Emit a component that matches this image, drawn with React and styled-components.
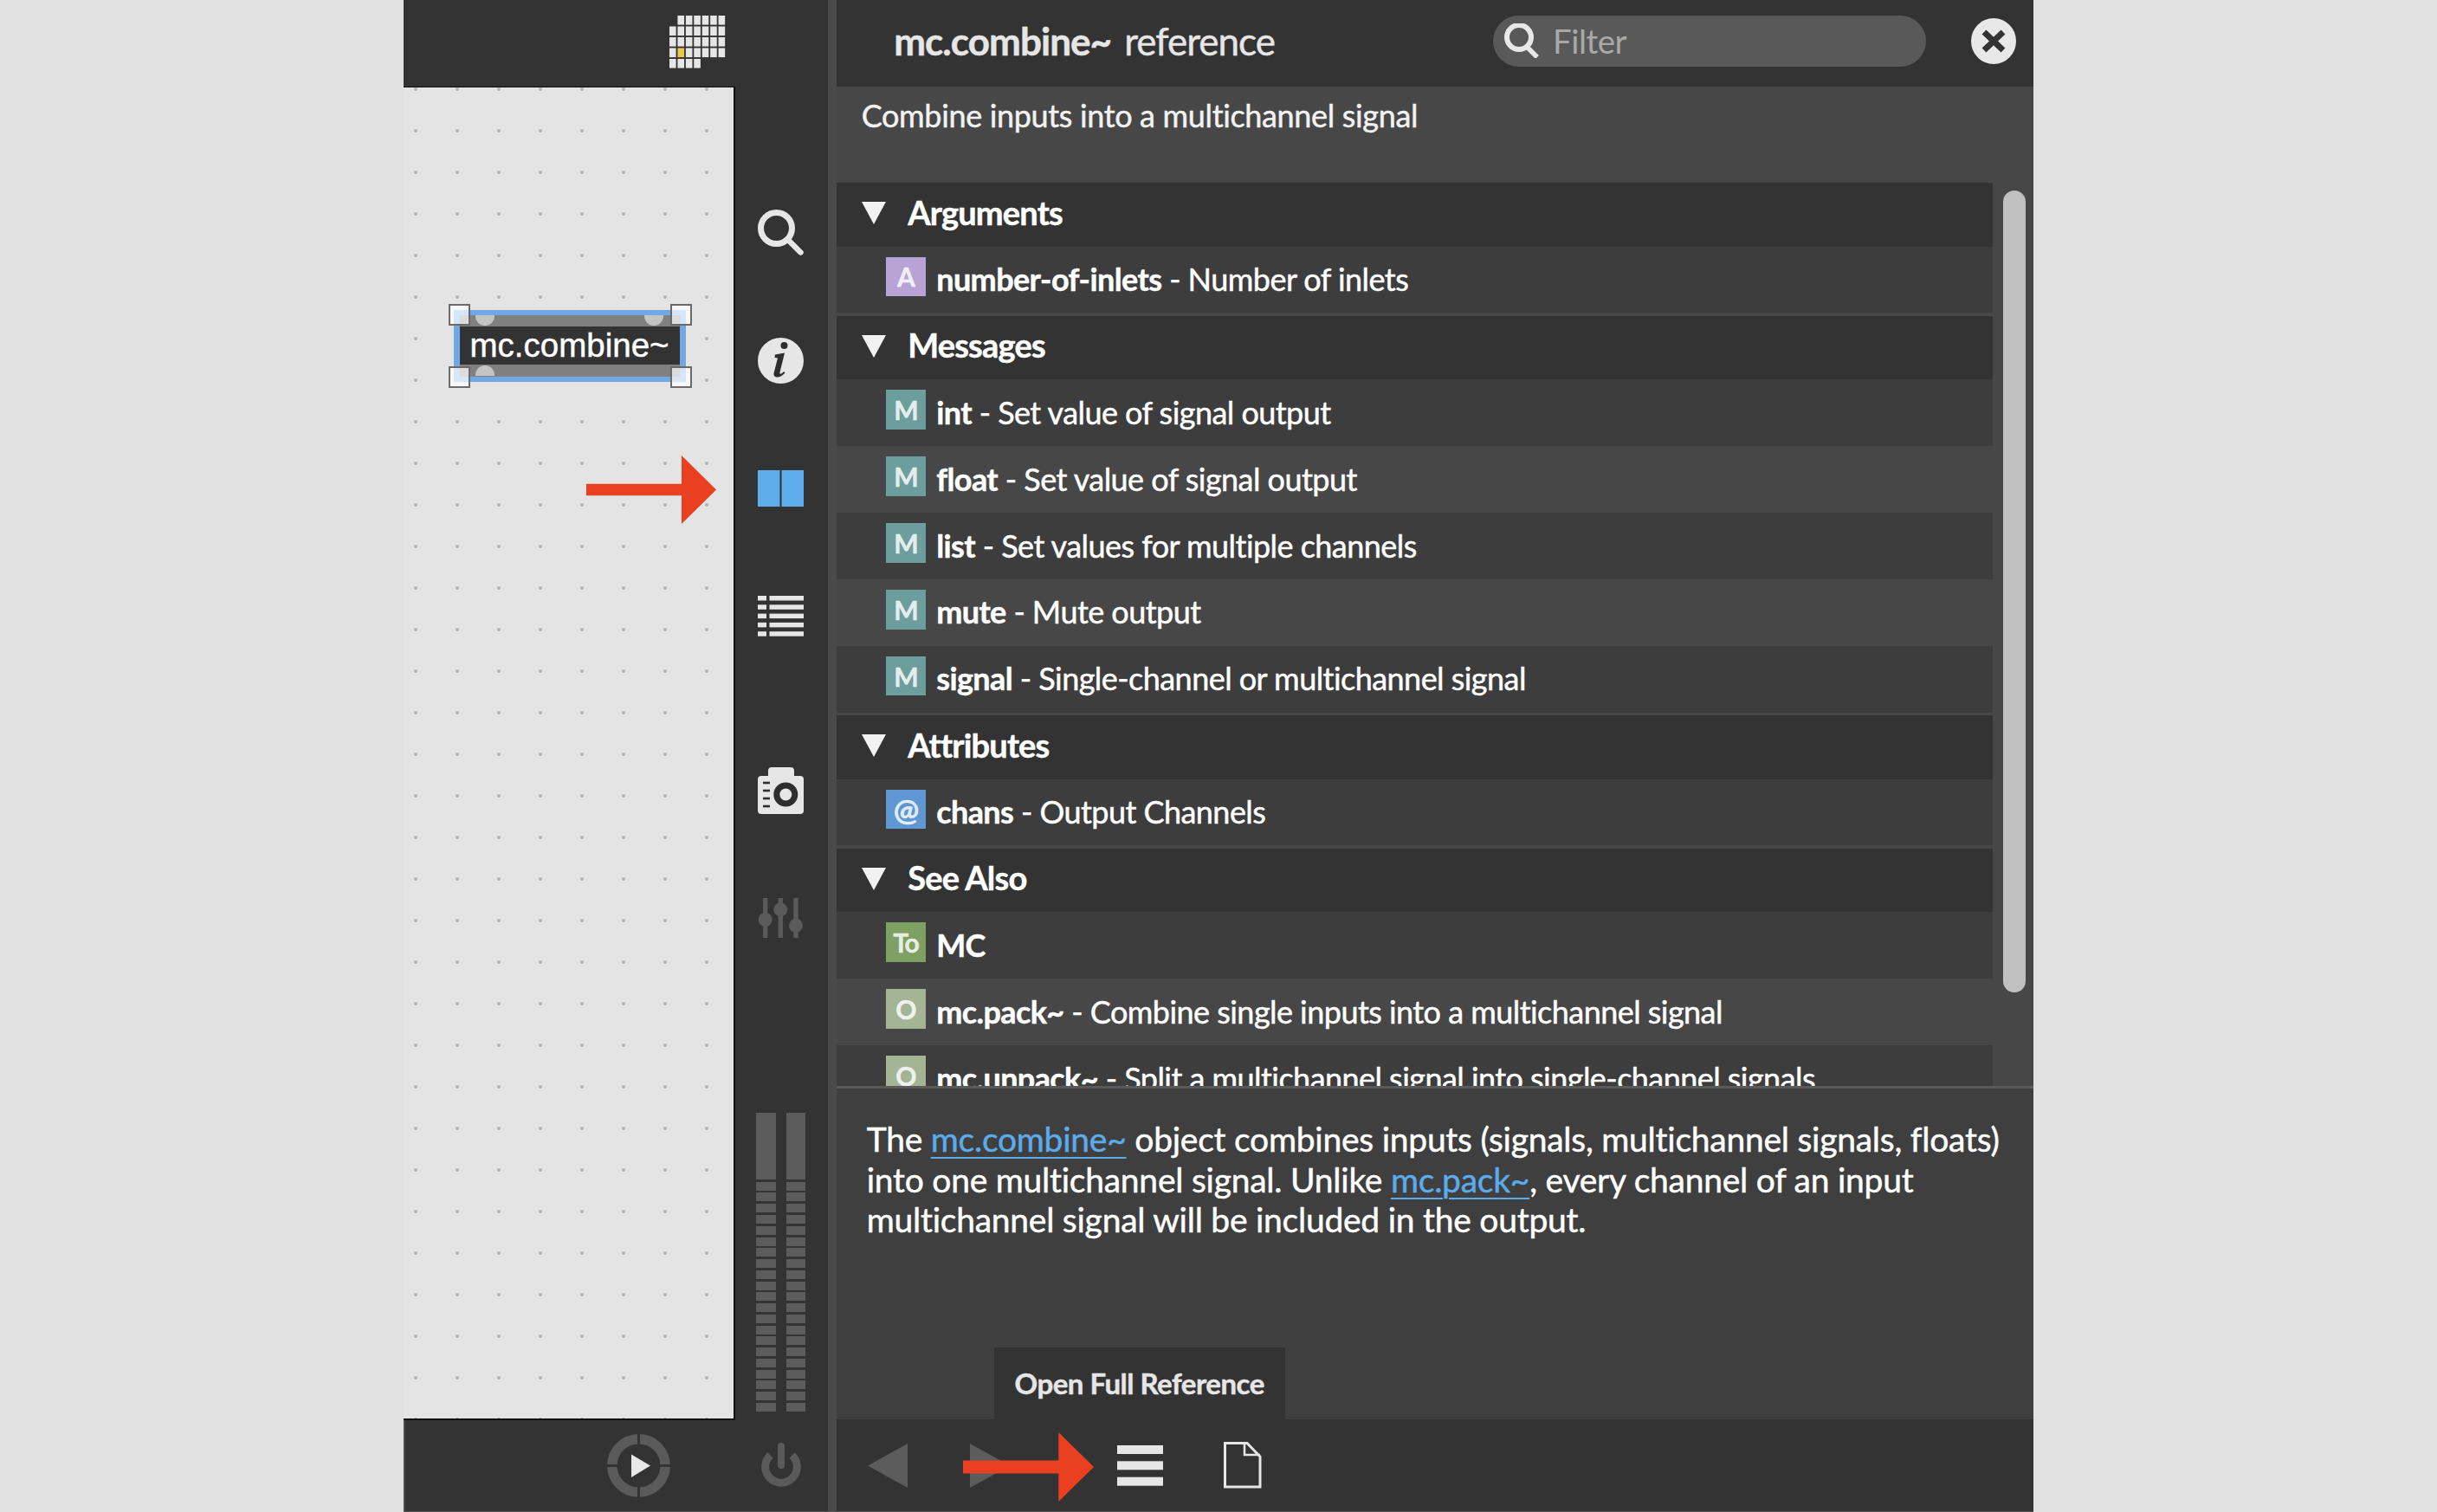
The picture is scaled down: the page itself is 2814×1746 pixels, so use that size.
import React from "react";
import styled, { createGlobalStyle } from "styled-components";

const Global = createGlobalStyle`
  html, body { margin: 0; padding: 0; background: #e1e1e1; }
  body { font-family: Lato, "Noto Sans", sans-serif; overflow: hidden; }
  * { box-sizing: border-box; }
`;

const Win = styled.div`
  width: 1882px; height: 1746px; margin: 0 auto;
  display: grid; grid-template-columns: 490px 9.7px 1fr;
  background: #333; overflow: hidden; border-bottom: 1px solid #555;
  -webkit-text-stroke: .45px currentColor;
`;

/* ---------- left patcher pane ---------- */
const Patcher = styled.section`
  display: grid; grid-template-columns: 383px 107px; grid-template-rows: 100px 1fr 105.5px;
  background: #333; min-height: 0;
`;
const PatcherTop = styled.header`
  grid-column: 1 / 3; display: flex; justify-content: flex-end; align-items: flex-start;
  padding: 17.5px 117.5px 0 0;
`;
const Canvas = styled.main`
  position: relative; background-color: #e4e4e4;
  background-image: radial-gradient(circle, #b4b4b4 1.6px, transparent 2.4px);
  background-size: 48px 48px; background-position: -10px -22px;
  border-top: 1px solid #111; border-right: 2px solid #111; border-bottom: 2px solid #111;
`;
const ObjectBox = styled.div`
  position: absolute; left: 58px; top: 257px; width: 268px; height: 83px;
  border: 6.5px solid #71a7e2; border-width: 6.5px 7px; background: #808080;
  display: flex; flex-direction: column;
`;
const PortBand = styled.div`
  height: 13px; display: flex; justify-content: space-between; padding: 0 19px 0 18px;
  align-items: ${p => (p.$bottom ? "flex-end" : "flex-start")};
`;
const Port = styled.span`
  width: 22px; height: 12px; background: #c4c4c4;
  border-radius: ${p => (p.$bottom ? "11px 11px 0 0" : "0 0 11px 11px")};
`;
const ObjectBody = styled.div`
  height: 44px; background: #333; color: #fff; padding: 1px 0 0 11.5px;
  font: 38.5px/42px "Liberation Sans", Arial, sans-serif; white-space: nowrap;
`;
const Handle = styled.span`
  position: absolute; width: 25px; height: 25px; border: 2.5px solid #6a6a6a;
  background: rgba(255,255,255,.72);
  ${p => (p.$r ? "right: -14px;" : "left: -13.5px;")}
  ${p => (p.$b ? "bottom: -13px;" : "top: -13px;")}
`;
const ArrowOverlay = styled.svg`
  position: absolute; display: block;
  ${p => p.$pos}
`;

const Toolbar = styled.aside`
  display: flex; flex-direction: column; align-items: center; padding: 95px 2px 9.5px 0;
`;
const ToolSlot = styled.div`
  height: 147.5px; width: 100%; display: flex; align-items: center; justify-content: center;
`;
const ToolGap = styled.div` height: 54px; flex: none; `;
const Meter = styled.div`
  margin-top: auto; display: flex; gap: 12px;
`;
const MeterChannel = styled.div`
  width: 22.7px; display: flex; flex-direction: column; gap: 2.77px;
`;
const MeterPeak = styled.div` height: 77px; background: #5c5c5c; `;
const MeterSeg = styled.div` height: 10px; background: #5c5c5c; `;

const PatcherBottom = styled.footer`
  grid-column: 1 / 3; display: flex; justify-content: flex-end; align-items: center;
  padding: 0 31px 0 0; gap: 104.8px; border-left: 2px solid #4a4a4a;
`;

/* ---------- divider ---------- */
const Split = styled.div` background: #4a4a4a; `;

/* ---------- reference pane ---------- */
const Reference = styled.section`
  display: flex; flex-direction: column; min-height: 0; min-width: 0; background: #3f3f3f;
`;
const RefHeader = styled.header`
  height: 100px; flex: none; background: #333; display: flex; align-items: flex-start; position: relative;
  padding: 0 20px 0 66.5px;
`;
const Title = styled.h1`
  margin: 0; align-self: center; padding-bottom: 7px; font-size: 44px; font-weight: 400; color: #e6e6e6;
  white-space: nowrap; letter-spacing: -1px; flex: 1;
  & b { font-weight: 700; margin-right: 15px; letter-spacing: -.95px; }
`;
const FilterBox = styled.div`
  width: 499.5px; height: 58.5px; border-radius: 30px; background: #595959; margin: 18px 52.5px 0 0;
  display: flex; align-items: center; padding-left: 12px; gap: 15px;
  font-size: 38.5px; color: #a9a9a9; letter-spacing: -.5px; -webkit-text-stroke: 0;
`;
const Summary = styled.div`
  height: 111px; flex: none; background: #474747; color: #f2f2f2;
  font-size: 36px; line-height: 44px; padding: 10.5px 0 0 29px; letter-spacing: -.35px;
`;
const RefBody = styled.div`
  height: 1043px; flex: none; display: flex; background: #474747; overflow: hidden;
`;
const RefList = styled.div`
  width: 1335px; flex: none; display: flex; flex-direction: column; gap: 3.5px;
`;
const Section = styled.div` display: flex; flex-direction: column; `;
const SectionHead = styled.div`
  height: 73.5px; flex: none; background: #333; display: flex; align-items: center;
  padding: 0 0 6.5px 29.5px; gap: 25px; color: #fff; font-size: 38px; font-weight: 700; letter-spacing: -.8px;
`;
const Caret = styled.span`
  width: 0; height: 0; border-style: solid; border-width: 26px 14px 0 14px; margin-top: 3px;
  border-color: #f2f2f2 transparent transparent transparent;
`;
const Row = styled.div`
  height: 76.85px; flex: none; display: flex; align-items: flex-start; padding: 12px 0 0 57.5px;
  background: ${p => (p.$light ? "#474747" : "#3d3d3d")};
  color: #fff; font-size: 36px; letter-spacing: -.55px; white-space: nowrap;
  & b { font-weight: 700; letter-spacing: -.6px; }
`;
const Badge = styled.span`
  width: 45.5px; height: 45.7px; flex: none; background: ${p => p.$c}; color: rgba(255,255,255,.82);
  display: flex; align-items: center; justify-content: center;
  font-size: ${p => (p.$big ? 35 : 30)}px; font-weight: 700; letter-spacing: -1px; margin-right: 12.5px;
`;
const RowText = styled.span` line-height: 46px; padding-top: 2.5px; `;
const ScrollTrack = styled.div` flex: 1; padding: 9px 9px 0 12.5px; `;
const ScrollThumb = styled.div` height: 925.5px; border-radius: 13px; background: #c0c0c0; `;
const RefRule = styled.div` height: 3px; flex: none; background: #5a5a5a; `;
const Details = styled.div`
  flex: 1; min-height: 0; position: relative; background: #3f3f3f;
  padding: 35px 30px 0 35px; color: #fff; font-size: 39px; line-height: 46.6px; letter-spacing: -.25px;
`;
const DocLink = styled.a`
  color: #5cabea; text-decoration: underline; text-decoration-thickness: 2px; text-underline-offset: 6px;
`;
const Tooltip = styled.div`
  position: absolute; left: 182px; bottom: 0; width: 336px; height: 83px; background: #333;
  display: flex; align-items: center; justify-content: center; color: #e6e6e6; font-size: 33px;
  font-weight: 700; letter-spacing: -.5px; white-space: nowrap;
`;
const RefFooter = styled.footer`
  height: 106px; flex: none; background: #333; display: flex; align-items: center; position: relative;
  padding-left: 36.7px;
`;
const NavIcon = styled.svg` display: block; flex: none; margin-right: ${p => p.$mr}px; `;
const CloseIcon = styled.svg` flex: none; display: block; margin-top: 20.5px; `;

/* ---------- drawings ---------- */
const GridGlyph = () => {
  const rows = [[1,6],[0,6],[0,6],[0,6],[0,3]];
  const cells = [];
  rows.forEach(([a, b], r) => {
    for (let c = a; c <= b; c++) {
      const hot = r === 3 && c === 1;
      cells.push(<rect key={r + "-" + c} x={c * 9.43} y={r * 12.5} width={7.6} height={10.6} fill={hot ? "#e9c94a" : "#e6e6e6"} />);
    }
  });
  return <svg width="66" height="63" viewBox="0 0 66 63">{cells}</svg>;
};
const SearchGlyph = () => (
  <svg width="53" height="53" viewBox="0 0 53 53" fill="none" stroke="#e6e6e6">
    <circle cx="21.5" cy="21.5" r="18" strokeWidth="7" />
    <path d="M34.5 34.5 L49.5 49.5" strokeWidth="6.5" strokeLinecap="round" />
  </svg>
);
const InfoGlyph = () => (
  <svg width="53" height="53" viewBox="0 0 53 53">
    <circle cx="26.5" cy="26.5" r="26.5" fill="#e6e6e6" />
    <circle cx="30.5" cy="9" r="4" fill="#2e2e2e" />
    <path d="M20 19.5 L31 17.5 L25.5 40 C25 43 27.5 42 30 39 L31.5 40.5 C27 46.5 17.5 47.5 18.5 41 L23 23.5 L19.5 23 Z" fill="#2e2e2e" />
  </svg>
);
const BookGlyph = () => (
  <svg width="53" height="42" viewBox="0 0 53 42">
    <rect x="0" y="0" width="25.5" height="42" fill="#5fadea" />
    <rect x="27.5" y="0" width="25.5" height="42" fill="#5fadea" />
  </svg>
);
const ListGlyph = () => (
  <svg width="53" height="49" viewBox="0 0 53 49" fill="#e6e6e6">
    {[0, 1, 2, 3, 4].map(i => (
      <g key={i}>
        <rect x="0" y={i * 10.3 + 1} width="10" height="5.5" />
        <rect x="13.5" y={i * 10.3 + 1} width="39.5" height="5.5" />
      </g>
    ))}
  </svg>
);
const CameraGlyph = () => (
  <svg width="53" height="54" viewBox="0 0 53 54">
    <path d="M12 10 V4 Q12 0 16 0 H38 Q42 0 42 4 V10 H49 Q53 10 53 14 V50 Q53 54 49 54 H4 Q0 54 0 50 V14 Q0 10 4 10 Z" fill="#e6e6e6" />
    <circle cx="32.3" cy="31.5" r="10.5" fill="none" stroke="#2e2e2e" strokeWidth="7" />
    {[18, 27, 36, 45].map(y => <rect key={y} x="6" y={y - 1.3} width="8" height="2.6" fill="#2e2e2e" />)}
  </svg>
);
const MixerGlyph = () => (
  <svg width="53" height="46" viewBox="0 0 53 46" fill="#5a5a5a">
    {[[8.7, 25], [26.3, 13.4], [44, 31.8]].map(([x, y]) => (
      <g key={x}>
        <rect x={x - 2.7} y="0" width="5.4" height="46" />
        <circle cx={x} cy={y} r="8" />
      </g>
    ))}
  </svg>
);
const PlayGlyph = () => (
  <svg width="73" height="73" viewBox="0 0 73 73">
    <circle cx="36.5" cy="36.5" r="30.7" fill="none" stroke="#5a5a5a" strokeWidth="11.5" />
    <rect x="35" y="0" width="3" height="73" fill="#333" />
    <rect x="0" y="35" width="73" height="3" fill="#333" />
    <path d="M28 23.5 L50 36.5 L28 50 Z" fill="#e8e8e8" />
  </svg>
);
const PowerGlyph = () => (
  <svg width="46" height="52" viewBox="0 0 46 52" fill="none" stroke="#5a5a5a" strokeLinecap="round">
    <path d="M10.5 14.5 A18.3 18.3 0 1 0 35.5 14.5" strokeWidth="9" strokeLinecap="butt" />
    <path d="M23 4 V26" strokeWidth="8" />
  </svg>
);
const FilterGlyph = () => (
  <svg width="42" height="40" viewBox="0 0 42 40" fill="none" stroke="#e8e8e8">
    <circle cx="18" cy="16" r="14" strokeWidth="6" />
    <path d="M27 27 L39 39" strokeWidth="5.5" />
  </svg>
);
const CloseGlyph = () => (
  <CloseIcon width="52" height="53" viewBox="0 0 52 53">
    <ellipse cx="26" cy="26.5" rx="26" ry="26.5" fill="#e8e8e8" />
    <path d="M15 16 L37 37 M37 16 L15 37" stroke="#333" strokeWidth="7" />
  </CloseIcon>
);
const RedArrow = ({ w, h, head, shaft }) => {
  const c = h / 2, t = shaft / 2, b = w - head;
  return <path d={`M0 ${c - t} H${b} V0 L${w} ${c} L${b} ${h} V${c + t} H0 Z`} fill="#ea4022" />;
};

const items = {
  args: [["#b8a3d6", "A", "number-of-inlets", "Number of inlets"]],
  msgs: [
    ["#6d9e9e", "M", "int", "Set value of signal output"],
    ["#6d9e9e", "M", "float", "Set value of signal output"],
    ["#6d9e9e", "M", "list", "Set values for multiple channels"],
    ["#6d9e9e", "M", "mute", "Mute output"],
    ["#6d9e9e", "M", "signal", "Single-channel or multichannel signal"],
  ],
  attrs: [["#5e97d4", "@", "chans", "Output Channels"]],
  see: [
    ["#7ea063", "To", "MC", ""],
    ["#a4b596", "O", "mc.pack~", "Combine single inputs into a multichannel signal"],
    ["#a4b596", "O", "mc.unpack~", "Split a multichannel signal into single-channel signals"],
  ],
};

const RefSection = ({ title, rows }) => (
  <Section>
    <SectionHead><Caret />{title}</SectionHead>
    {rows.map(([c, l, name, desc], i) => (
      <Row key={name} $light={i % 2 === 1}>
        <Badge $c={c} $big={l === "@"}>{l}</Badge>
        <RowText><b>{name}</b>{desc ? " - " + desc : ""}</RowText>
      </Row>
    ))}
  </Section>
);

export default function App() {
  return (
    <>
      <Global />
      <Win>
        <Patcher>
          <PatcherTop><GridGlyph /></PatcherTop>
          <Canvas>
            <ObjectBox>
              <Handle /><Handle $r /><Handle $b /><Handle $r $b />
              <PortBand><Port /><Port /></PortBand>
              <ObjectBody>mc.combine~</ObjectBody>
              <PortBand $bottom><Port $bottom /></PortBand>
            </ObjectBox>
            <ArrowOverlay $pos="left: 211px; top: 425px;" width="150" height="79" viewBox="0 0 150 79">
              <RedArrow w={150} h={79} head={40} shaft={13.5} />
            </ArrowOverlay>
          </Canvas>
          <Toolbar>
            <ToolSlot><SearchGlyph /></ToolSlot>
            <ToolSlot><InfoGlyph /></ToolSlot>
            <ToolSlot><BookGlyph /></ToolSlot>
            <ToolSlot><ListGlyph /></ToolSlot>
            <ToolGap />
            <ToolSlot><CameraGlyph /></ToolSlot>
            <ToolSlot><MixerGlyph /></ToolSlot>
            <Meter>
              {[0, 1].map(ch => (
                <MeterChannel key={ch}>
                  <MeterPeak />
                  {Array.from({ length: 21 }, (_, i) => <MeterSeg key={i} />)}
                </MeterChannel>
              ))}
            </Meter>
          </Toolbar>
          <PatcherBottom>
            <PlayGlyph />
            <PowerGlyph />
          </PatcherBottom>
        </Patcher>
        <Split />
        <Reference>
          <RefHeader>
            <Title><b>mc.combine~</b>reference</Title>
            <FilterBox><FilterGlyph />Filter</FilterBox>
            <CloseGlyph />
          </RefHeader>
          <Summary>Combine inputs into a multichannel signal</Summary>
          <RefBody>
            <RefList>
              <RefSection title="Arguments" rows={items.args} />
              <RefSection title="Messages" rows={items.msgs} />
              <RefSection title="Attributes" rows={items.attrs} />
              <RefSection title="See Also" rows={items.see} />
            </RefList>
            <ScrollTrack><ScrollThumb /></ScrollTrack>
          </RefBody>
          <RefRule />
          <Details>
            The <DocLink>mc.combine~</DocLink> object combines inputs (signals, multichannel signals, floats) into one multichannel signal. Unlike <DocLink>mc.pack~</DocLink>, every channel of an input multichannel signal will be included in the output.
            <Tooltip>Open Full Reference</Tooltip>
          </Details>
          <RefFooter>
            <NavIcon $mr={72} width="46" height="51" viewBox="0 0 46 51"><path d="M0 25.5 L46 0 V51 Z" fill="#5c5c5c" /></NavIcon>
            <NavIcon $mr={123.5} width="46" height="51" viewBox="0 0 46 51"><path d="M46 25.5 L0 0 V51 Z" fill="#5c5c5c" /></NavIcon>
            <NavIcon $mr={70} width="53" height="47" viewBox="0 0 53 47" fill="#e6e6e6">
              <rect y="0" width="53" height="10" /><rect y="18.3" width="53" height="10" /><rect y="36.7" width="53" height="10" />
            </NavIcon>
            <NavIcon $mr={0} width="44" height="54" viewBox="0 0 44 54" fill="none" stroke="#e6e6e6">
              <path d="M1.5 1.5 H27 L42 17 V52 H1.5 Z" strokeWidth="3" />
              <path d="M24 2 V15 H42" strokeWidth="2.5" />
            </NavIcon>
            <ArrowOverlay $pos="left: 146px; top: 15px;" width="151" height="80" viewBox="0 0 151 80">
              <RedArrow w={151} h={80} head={40.7} shaft={15} />
            </ArrowOverlay>
          </RefFooter>
        </Reference>
      </Win>
    </>
  );
}
